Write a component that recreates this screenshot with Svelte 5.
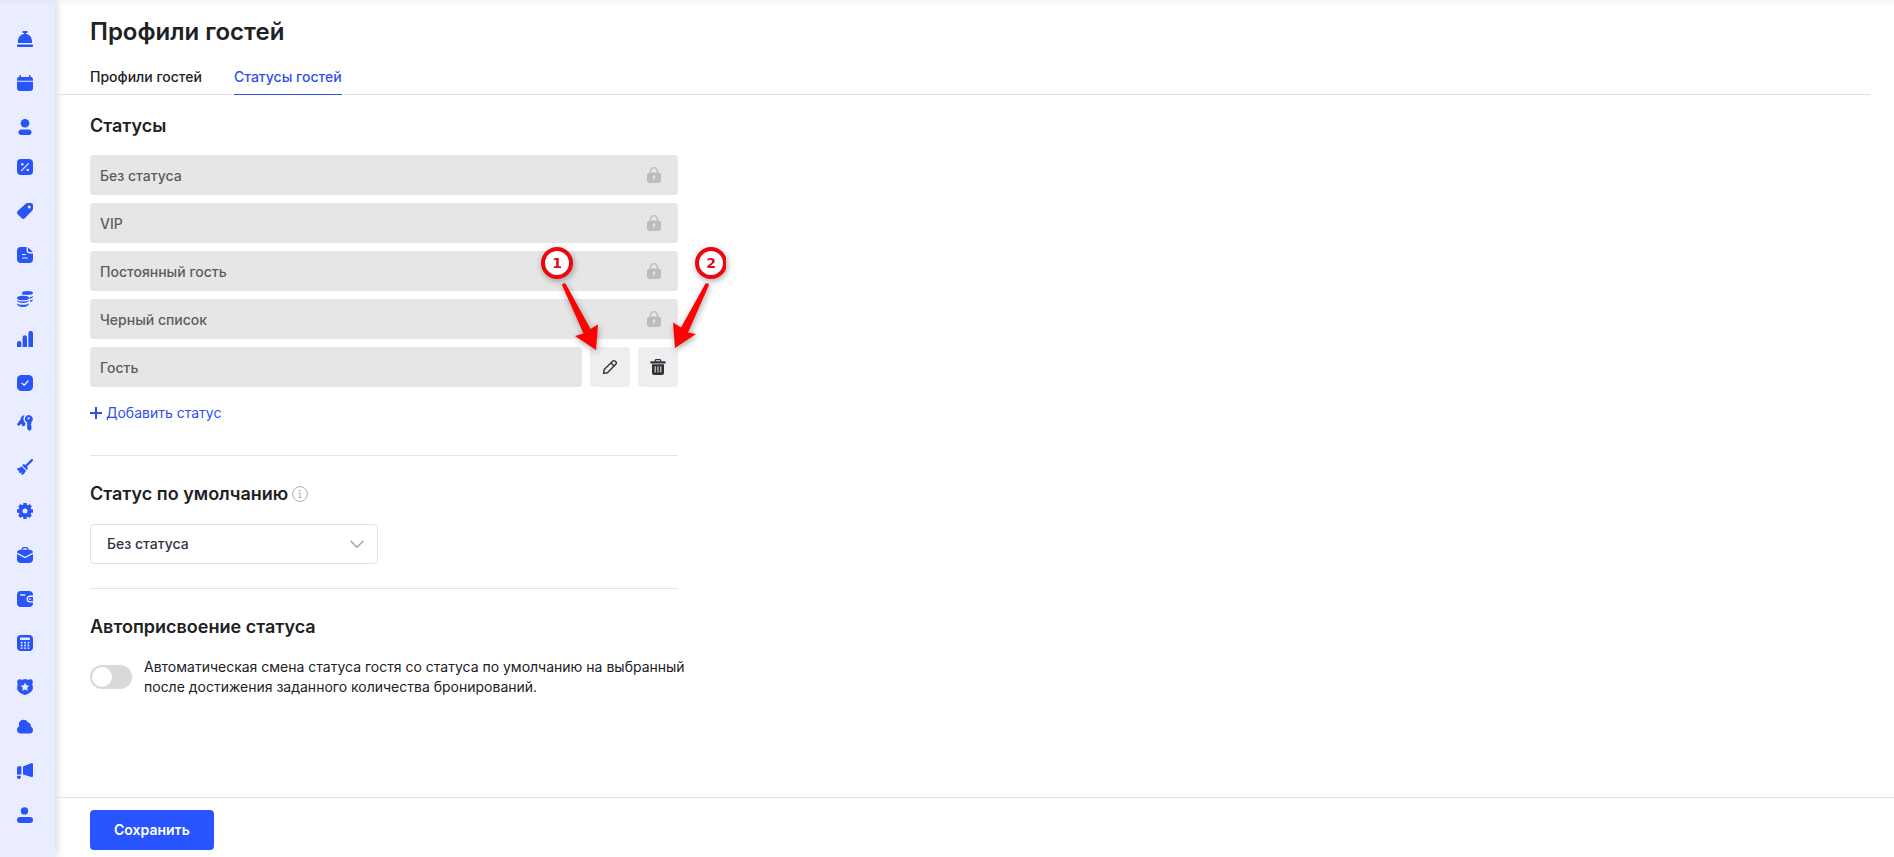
<script>
  const nav = [
    { name: 'Стойка', body: '<rect x="5.3" y="0" width="5.4" height="2" rx="1"/><path d="M7 1.5h2v1.6c3.4.5 6 3.3 6 7V12H1v-1.900c0-3.700 2.600-6.500 6-7z"/><rect y="13.600" width="16" height="2.400" rx=".8"/>' },
    { name: 'Календарь', body: '<path d="M3.200 0a.8.8 0 0 1 .8.8V2h8V.8a.8.8 0 0 1 1.600 0V2A2.400 2.400 0 0 1 16 4.400v1.300H0V4.400A2.400 2.400 0 0 1 2.400 2V.8a.8.8 0 0 1 .8-.8zM0 6.800h16v6.800a2.400 2.400 0 0 1-2.400 2.400H2.400A2.400 2.400 0 0 1 0 13.600z"/>' },
    { name: 'Гости', body: '<circle cx="8" cy="4.300" r="4.300"/><rect x="1.600" y="10.400" width="12.800" height="5.600" rx="2.800"/>' },
    { name: 'Тарифы', tight: true, body: '<rect width="16" height="16" rx="4"/><path d="M4.600 11.600l6.800-7" stroke="#e9edff" stroke-width="1.300" stroke-linecap="round"/><circle cx="5.300" cy="5.200" r="1.200" fill="#e9edff"/><circle cx="10.800" cy="10.900" r="1.200" fill="#e9edff"/>' },
    { name: 'Акции', body: '<path fill-rule="evenodd" d="M8.500.9A3 3 0 0 1 10.600 0H14a2 2 0 0 1 2 2v3.600a3 3 0 0 1-.9 2.100l-7.300 7.500a2.200 2.200 0 0 1-3.100 0L.7 11.200a2.200 2.200 0 0 1 0-3.100zM12.200 2.500a1.500 1.500 0 1 0 0 3 1.500 1.500 0 0 0 0-3z"/>' },
    { name: 'Документы', body: '<path d="M4 0h5.600v3.800A2.800 2.800 0 0 0 12.400 6.500H16V12a4 4 0 0 1-4 4H4a4 4 0 0 1-4-4V4a4 4 0 0 1 4-4z"/><path d="M11 .2l4.800 4.900h-3A1.700 1.700 0 0 1 11 3.400z"/><path d="M5.500 7.500h3M5.500 11h5" stroke="#e9edff" stroke-width="1.200" stroke-linecap="round"/>' },
    { name: 'Финансы', body: '<ellipse cx="10.500" cy="1.900" rx="5.500" ry="1.900"/><ellipse cx="6" cy="7" rx="6" ry="2.300"/><path d="M12.300 6.400c1.600-.3 3-.9 3.700-1.700 0 1.700-1.300 2.800-3.200 3.200zM13 9.500c1.300-.3 2.400-.9 3-1.600 0 1.600-1.200 2.800-3 3.200zM4.500 4.100C5 3.400 5.400 3.500 6 3.600l2 .5zM0 9c2 2.100 10 2.100 12 0 0 4-12 4-12 0zM0 12.200c2 2.100 10 2.100 12 0 0 5-12 5-12 0z"/>' },
    { name: 'Отчеты', tight: true, body: '<path d="M0 16v-3.800a2 2 0 0 1 4.400 0V16zM5.600 16V6.500a2.200 2.200 0 0 1 4.400 0V16zM11.400 16V2.200a2.200 2.200 0 0 1 4.600 0V16z"/>' },
    { name: 'Задачи', body: '<rect width="16" height="16" rx="4.500"/><path d="M5 8.200l2.200 2L11 6" fill="none" stroke="#e9edff" stroke-width="1.300" stroke-linecap="round" stroke-linejoin="round"/>' },
    { name: 'Доступ', tight: true, body: '<path fill-rule="evenodd" d="M7.800 4.200a4 4 0 1 1 6.600 2.900v1.700l-.8 1 .8 1v3.400L12.600 16 10.200 14V7.500a4 4 0 0 1-2.400-3.300zM11.600 2.200a1.100 1.100 0 1 0 0 2.200 1.100 1.100 0 0 0 0-2.200z"/><path d="M7.700.2C6.400 1.500 6 4 7 6.200c.4.900.9 1.400 1.600 1.900L8 10.400l-2 .9-1.400-1.100.4-1.100-1.300-.1-.5 1.300-2 .4L0 9.200l3.600-4.900C3.700 2 5.400.1 7.700.2z"/>' },
    { name: 'Уборка', body: '<path d="M15.700.3a1.100 1.100 0 0 1 0 1.600L10 7.500c1 1.300.9 2.600-.3 3.400L5 6.300c.9-1.200 2.300-1.300 3.500-.4L14.100.3a1.100 1.100 0 0 1 1.600 0z"/><path d="M4.400 7.200l4.400 4.400c-.4 1.700-1.600 3.300-3.300 4.400l-1.500-.9 1-2-2 1.100-1.300-1.300 1.100-1.300-1.700.4L0 9.400 1.500 9c1 0 2-.7 2.900-1.800z"/>' },
    { name: 'Настройки', body: '<circle cx="8" cy="8" r="4.500" fill="none" stroke="currentColor" stroke-width="4"/><path d="M8 0v3M8 13v3M0 8h3M13 8h3M2.300 2.300l2 2M11.700 11.700l2 2M2.300 13.700l2-2M11.700 4.300l2-2" stroke="currentColor" stroke-width="3.400"/>' },
    { name: 'Услуги', body: '<path d="M4.500 2.800A2.700 2.700 0 0 1 7 0h2a2.700 2.700 0 0 1 2.500 2.800h1A3.500 3.500 0 0 1 16 5.600L8 9.800 0 5.600a3.500 3.500 0 0 1 3.500-2.800zm1.300 0h4.400A1.500 1.500 0 0 0 9 1.300H7a1.500 1.500 0 0 0-1.200 1.500z" fill-rule="evenodd"/><path d="M0 7l8 4.200L16 7v5a4 4 0 0 1-4 4H4a4 4 0 0 1-4-4z"/>' },
    { name: 'Кошелек', body: '<path d="M4 0h8a4 4 0 0 1 4 4v.6h-3a3.500 3.500 0 0 0 0 7h3V12a4 4 0 0 1-4 4H4a4 4 0 0 1-4-4V4a4 4 0 0 1 4-4z"/><path d="M16 5.900v4.400h-3a2.200 2.200 0 0 1 0-4.400z"/><path d="M3.600 4h4.200" stroke="#e9edff" stroke-width="1.300" stroke-linecap="round"/><path d="M12.400 8.100h1.200" stroke="#e9edff" stroke-width="1.400" stroke-linecap="round"/>' },
    { name: 'Калькулятор', body: '<rect width="16" height="16" rx="4"/><g fill="#e9edff"><rect x="3" y="2.500" width="10" height="2.500" rx=".7"/><rect x="3.800" y="6.800" width="1.700" height="1.700"/><rect x="7.200" y="6.800" width="1.700" height="1.700"/><rect x="10.600" y="6.800" width="1.700" height="1.700"/><rect x="3.800" y="9.600" width="1.700" height="1.700"/><rect x="7.200" y="9.600" width="1.700" height="1.700"/><rect x="10.600" y="9.600" width="1.700" height="1.700"/><rect x="3.800" y="12.400" width="1.700" height="1.500"/><rect x="7.200" y="12.400" width="1.700" height="1.500"/><rect x="10.600" y="12.400" width="1.700" height="1.500"/></g>' },
    { name: 'Безопасность', body: '<path d="M2 0c1.800 1 3.800.9 6 0 2.200.9 4.200 1 6 0l2 2.200c-.9 1.900-.7 3.500-.2 5.300C16.700 12.500 12 14.500 8 16 4 14.500-.7 12.500.2 7.500.7 5.700.900 4.100 0 2.200z"/><path d="M8 3.600l1.400 2.700 2.900.5-2.100 2 .5 2.900L8 10.400l-2.700 1.300.5-2.900-2.100-2 2.900-.5z" fill="#e9edff"/>' },
    { name: 'Облако', tight: true, body: '<path d="M4 14.500a4 4 0 0 1-4-3.900 3.600 3.600 0 0 1 2.200-3.400A4.600 4.600 0 0 1 10.900 3.600 3.200 3.200 0 0 1 13.800 7.500 3.500 3.500 0 0 1 16 10.900a3.600 3.600 0 0 1-3.700 3.600z"/>' },
    { name: 'Маркетинг', body: '<path d="M6 3.500L14.200.2A1.200 1.200 0 0 1 16 1.300v11.500a1.200 1.200 0 0 1-1.600 1.100L6 11.500zM1.800 3.200h2.600v8.300H0V5a1.800 1.800 0 0 1 1.800-1.800zM0 12.700h3.800V14a1.900 1.900 0 0 1-3.800 0z"/>' },
    { name: 'Профиль', body: '<circle cx="7.500" cy="3.900" r="3.700"/><rect y="10" width="16" height="6" rx="3"/>' }
  ];

  const locked = ['Без статуса', 'VIP', 'Постоянный гость', 'Черный список'];
  let selected = $state('Без статуса');
  let auto = $state(false);
</script>

<div class="app">
  <nav class="sidebar" aria-label="Главное меню">
    {#each nav as item}
      <a href="#top" class:tight={item.tight} aria-label={item.name}>
        <svg viewBox="0 0 16 16" fill="currentColor">{@html item.body}</svg>
      </a>
    {/each}
  </nav>

  <div class="page">
    <header>
      <h1>Профили гостей</h1>
      <div class="tabs">
        <a href="#profiles">Профили гостей</a>
        <a href="#statuses" class="active" aria-current="page">Статусы гостей</a>
      </div>
    </header>

    <main>
      <section class="statuses">
        <h2>Статусы</h2>
        <div class="list">
          {#each locked as name}
            <div class="row">
              <div class="field">
                <input value={name} aria-label="Статус" disabled />
                <svg class="lock" viewBox="0 0 14 16">
                  <path d="M3.500 6.500V4.200a3.500 3.500 0 0 1 7 0v2.300" fill="none" stroke="#bdbdbd" stroke-width="1.400" />
                  <rect y="5.400" width="14" height="10.600" rx="3" fill="#bdbdbd" />
                  <circle cx="7" cy="9.800" r="1.200" fill="#e6e6e6" />
                  <path d="M7 10v2.500" stroke="#e6e6e6" stroke-width="1.200" stroke-linecap="round" />
                </svg>
              </div>
            </div>
          {/each}
          <div class="row">
            <div class="field"><input value="Гость" aria-label="Статус" disabled /></div>
            <button class="tool" aria-label="Изменить">
              <svg viewBox="0 0 16 16" fill="none" stroke="#2f323c" stroke-width="1.400" stroke-linejoin="round">
                <path d="M1.600 14.400l.6-3.800L10.900 2a1.400 1.400 0 0 1 2 0l1.100 1.100a1.400 1.400 0 0 1 0 2L5.400 13.800zM9 3.900L12.100 7" />
              </svg>
            </button>
            <button class="tool" aria-label="Удалить">
              <svg viewBox="0 0 16 16">
                <path d="M5.300 2.500V1.400A.8.8 0 0 1 6.100.6h3.800a.8.8 0 0 1 .8.800v1.100" fill="none" stroke="#2f323c" stroke-width="1.200" />
                <rect x=".4" y="2.300" width="15.200" height="2.200" rx=".6" fill="#2f323c" />
                <path d="M2 5.300h12v8.700a2 2 0 0 1-2 2H4a2 2 0 0 1-2-2z" fill="#2f323c" />
                <path d="M5.200 7.300v6.200M8 7.300v6.200M10.800 7.300v6.200" stroke="#eee" stroke-width="1" />
              </svg>
            </button>
          </div>

          <svg class="marks" viewBox="0 0 190 130" aria-hidden="true">
            <g fill="#fd0202">
              <path d="M26 50q.5-2.500 3.500-1.500L54.500 94 62 89.500l-2 25.500-21-14 8.500-2.500z" />
              <path d="M173 50q-.5-2.500-3.500-1.500L145 92.500l-8-5 2 25.500 21-14-8-1.500z" />
            </g>
            <g fill="#fff" stroke="#ee0510" stroke-width="4">
              <circle cx="21" cy="28" r="14" />
              <circle cx="175" cy="28" r="14" />
            </g>
            <g class="digits">
              <text x="21" y="33">1</text>
              <text x="175" y="33">2</text>
            </g>
          </svg>
        </div>
        <button class="add">
          <svg viewBox="0 0 12 12"><path d="M6 0v12M0 6h12" stroke="currentColor" stroke-width="2" /></svg>
          Добавить статус
        </button>
      </section>

      <section>
        <h2>
          <label for="default-status">Статус по умолчанию</label>
          <svg class="info" viewBox="0 0 16 16" fill="none" stroke="#adadad">
            <circle cx="8" cy="8" r="7.400" />
            <path d="M6.500 7H8v4.500M6.500 11.500h3" />
            <circle cx="8" cy="4.500" r=".5" />
          </svg>
        </h2>
        <div class="select">
          <select id="default-status" bind:value={selected}>
            {#each [...locked, 'Гость'] as name}<option>{name}</option>{/each}
          </select>
          <svg viewBox="0 0 14 8" fill="none" stroke="#a6a6a6" stroke-width="1.600"><path d="M.6.8L7 7.200 13.400.8" /></svg>
        </div>
      </section>

      <section>
        <h2>Автоприсвоение статуса</h2>
        <label class="switch">
          <input type="checkbox" role="switch" bind:checked={auto} />
          <span>Автоматическая смена статуса гостя со статуса по умолчанию на выбранный после достижения заданного количества бронирований.</span>
        </label>
      </section>
    </main>

    <footer><button class="save">Сохранить</button></footer>
  </div>
</div>

<style>
  :global(body) {
    margin: 0;
    background: #fff;
  }
  .app {
    display: flex;
    min-height: 100vh;
    font: 500 14px/20px Inter, 'Open Sans', sans-serif;
    color: #202124;
    background: linear-gradient(#f7f7f7, #fff 6px);
  }
  .app *,
  .app *::before {
    box-sizing: border-box;
  }
  a {
    color: inherit;
    text-decoration: none;
  }
  button,
  input,
  select {
    font: inherit;
    color: inherit;
  }
  button {
    border: 0;
    cursor: pointer;
  }
  svg {
    display: block;
    flex: none;
  }
  .sidebar {
    flex: none;
    display: flex;
    flex-direction: column;
    gap: 24px;
    width: 55px;
    padding: 27px 0 0 17px;
    color: #2854f8;
    background: linear-gradient(#e2e6f6, #e9edff 6px);
    box-shadow: 0 0 10px rgba(0, 0, 0, 0.22);
  }
  .sidebar a {
    width: 16px;
    padding-top: 4px;
  }
  .sidebar a.tight {
    padding-top: 0;
  }
  .sidebar svg {
    width: 16px;
    height: 16px;
  }
  .page {
    flex: 1;
    min-width: 0;
    display: flex;
    flex-direction: column;
  }
  header {
    margin-right: 24px;
    padding: 16px 0 0 35px;
    border-bottom: 1px solid #e2e2e4;
  }
  h1 {
    margin: 0;
    font-size: 24px;
    line-height: 32px;
    font-weight: 600;
  }
  .tabs {
    display: flex;
    gap: 32px;
    margin-top: 19px;
  }
  .tabs a {
    padding-bottom: 7px;
    margin-bottom: -1px;
    border-bottom: 1px solid transparent;
  }
  .tabs .active {
    color: #2f4ff0;
    border-color: #2f4fe0;
  }
  main {
    flex: 1;
    padding: 19px 35px;
  }
  section {
    max-width: 588px;
    padding-bottom: 24px;
  }
  section + section {
    padding-top: 26px;
    border-top: 1px solid #e4e4e6;
  }
  .statuses {
    padding-bottom: 32px;
  }
  h2 {
    display: flex;
    align-items: center;
    gap: 4px;
    margin: 0 0 17px;
    font-size: 18px;
    line-height: 24px;
    font-weight: 600;
  }
  section + section h2 {
    margin-bottom: 18px;
  }
  .list {
    position: relative;
    display: grid;
    gap: 8px;
  }
  .row {
    display: flex;
    gap: 8px;
  }
  .field {
    flex: 1;
    display: flex;
    align-items: center;
    height: 40px;
    padding: 0 17px 0 10px;
    border-radius: 4px;
    background: #e6e6e6;
    color: #5c5c5c;
  }
  .field input {
    flex: 1;
    min-width: 0;
    padding: 1px 0 0;
    border: 0;
    background: none;
  }
  .lock {
    width: 14px;
    height: 16px;
  }
  .tool {
    display: grid;
    place-items: center;
    width: 40px;
    height: 40px;
    padding: 0;
    border-radius: 4px;
    background: #eee;
  }
  .tool svg {
    width: 16px;
    height: 16px;
  }
  .marks {
    position: absolute;
    top: 80px;
    left: 446px;
    width: 190px;
    height: 130px;
    pointer-events: none;
    filter: drop-shadow(1px 2px 3px rgba(0, 0, 0, 0.35));
  }
  .digits {
    font: 700 14px 'DejaVu Sans', sans-serif;
    fill: #e4061a;
    text-anchor: middle;
  }
  .add {
    display: flex;
    align-items: center;
    gap: 4px;
    margin-top: 16px;
    padding: 0;
    background: none;
    color: #2f4ff0;
    font-weight: 400;
  }
  .add svg {
    width: 12px;
    height: 12px;
  }
  .info {
    width: 16px;
    height: 16px;
  }
  .select {
    display: grid;
    align-items: center;
    max-width: 288px;
  }
  .select select,
  .select svg {
    grid-area: 1 / 1;
  }
  .select select {
    appearance: none;
    width: 100%;
    height: 40px;
    padding: 0 40px 0 16px;
    border: 1px solid #e2e2e4;
    border-radius: 4px;
    background: #fff;
    color: #2f3447;
  }
  .select svg {
    justify-self: end;
    width: 14px;
    height: 8px;
    margin-right: 14px;
    pointer-events: none;
  }
  .switch {
    display: flex;
    align-items: center;
    gap: 12px;
    margin-right: -16px;
    font-weight: 400;
  }
  .switch input {
    appearance: none;
    flex: none;
    width: 42px;
    height: 24px;
    margin: 0;
    padding: 2px;
    border-radius: 12px;
    background: #d9d9d9;
  }
  .switch input::before {
    content: '';
    display: block;
    width: 20px;
    height: 20px;
    border-radius: 50%;
    background: #fff;
  }
  .switch input:checked {
    background: #2854ff;
  }
  .switch input:checked::before {
    margin-left: 18px;
  }
  footer {
    padding: 12px 35px 7px;
    border-top: 1px solid #e2e2e4;
  }
  .save {
    height: 40px;
    padding: 0 24px;
    border-radius: 4px;
    background: #2854ff;
    color: #fff;
    font-weight: 600;
  }
</style>
